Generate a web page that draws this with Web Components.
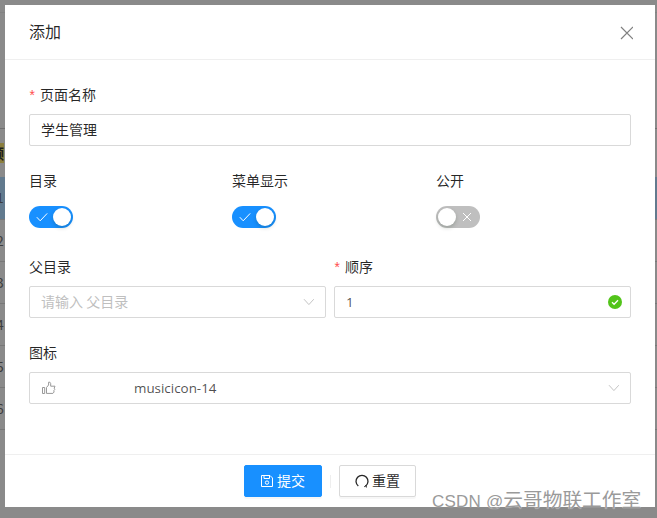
<!DOCTYPE html>
<html><head><meta charset="utf-8">
<style>
html,body{margin:0;padding:0;height:100%;overflow:hidden;background:#8a8a8a}
body{font-family:"Noto Sans CJK SC","Liberation Sans",sans-serif}
</style></head>
<body>
<app-page></app-page>
<template id="t-page">
<style>
:host{display:block;width:657px;height:518px;position:relative;overflow:hidden;background:#8a8a8a}
</style>
<bg-table></bg-table>
<modal-dialog title="添加">
  <form-row cols="1">
    <form-item label="页面名称" required><text-box value="学生管理"></text-box></form-item>
  </form-row>
  <form-row cols="3">
    <form-item label="目录"><toggle-switch on></toggle-switch></form-item>
    <form-item label="菜单显示"><toggle-switch on></toggle-switch></form-item>
    <form-item label="公开"><toggle-switch></toggle-switch></form-item>
  </form-row>
  <form-row cols="2">
    <form-item label="父目录"><text-box placeholder="请输入 父目录" suffix="chevron"></text-box></form-item>
    <form-item label="顺序" required><text-box value="1" suffix="ok" latin></text-box></form-item>
  </form-row>
  <form-row cols="1">
    <form-item label="图标"><text-box value="musicicon-14" suffix="chevron" icon latin></text-box></form-item>
  </form-row>
  <ui-button slot="footer" primary icon="save">提交</ui-button>
  <span slot="footer" style="width:1px;height:13px;background:#eee;margin:0 8px"></span>
  <ui-button slot="footer" icon="reload">重置</ui-button>
</modal-dialog>
<water-mark></water-mark>
</template>
<script>
const svg={
 save:'<svg width="14" height="14" viewBox="0 0 14 14" fill="none" stroke="currentColor" stroke-width="1"><path d="M1.5 1.5h8.5l2.5 2.5v8.5h-11z"/><path d="M4 1.5v3h5.5v-3"/><circle cx="7" cy="8.6" r="1.7"/></svg>',
 reload:'<svg width="14" height="14" viewBox="0 0 14 14" fill="none" stroke="currentColor" stroke-width="1.3"><path d="M3.3 12A6 6 0 1 1 10.7 12"/><path d="M9.2 12.8 11 11.6l.4 1.9" stroke-width="1"/></svg>',
 close:'<svg width="14" height="14" viewBox="0 0 14 14" fill="none" stroke="#808080" stroke-width="1.2"><path d="M2 1l12 12M14 1L2 13"/></svg>',
 chevron:'<svg width="12" height="12" viewBox="0 0 12 12" fill="none" stroke="#c4c4c4" stroke-width="1"><path d="M2 3.2 6.9 8.6 11.8 3.2"/></svg>',
 ok:'<svg width="14" height="14" viewBox="0 0 14 14"><circle cx="7" cy="7" r="7" fill="#52c41a"/><path d="M4 7.2l2.1 2.1L10 5.2" fill="none" stroke="#fff" stroke-width="1.3"/></svg>',
 thumb:'<svg width="16" height="16" viewBox="0 0 16 16" fill="none" stroke="#999" stroke-width="1"><path d="M1.5 7.5h2.2v6H1.5z"/><path d="M5.5 7.5 7.6 5V2.2h1.3l.8 1.4v2.6h4.3l-.8 2 .6 1.2-1 1.3.3 1.3-1.2 1.4H5.5z"/></svg>',
 check:'<svg width="12" height="12" viewBox="0 0 12 12" fill="none" stroke="#fff" stroke-width="1"><path d="M.8 6.2 4.2 9.8 11.2 2.4"/></svg>',
 cross:'<svg width="10" height="10" viewBox="0 0 10 10" fill="none" stroke="#fff" stroke-width="1"><path d="M1 1l8 8M9 1l-8 8"/></svg>'
};
function def(name,cls){customElements.define(name,cls)}
class Base extends HTMLElement{
  render(html){this.attachShadow({mode:'open'}).innerHTML=html}
}
def('bg-table',class extends Base{connectedCallback(){
  const marks=['1','2','3','4','5','6'];
  this.render(`<style>
  :host{display:block;height:518px;color:#333;font-size:14px}
  .gap{height:128px;box-sizing:border-box;padding-top:12px}
  .gap div{height:1px;background:#828282}
  .h{height:48px;border-top:1px solid #6f6f6f;font-weight:700;display:flex;align-items:center;color:#1c1c1c}
  .h span{margin-left:-10px;font-size:14px;background:#8b7f3e;}
  .r{height:41px;border-top:1px solid #787878;line-height:40px;font-size:14px;color:#3d3d3d}
  .r span{margin-left:-4px;display:inline-block}
  .r.sel{background:#627a8e;height:42px;border-top:0}
  </style>
  <div class="gap"><div></div></div>
  <div class="h"><span>顾</span></div>
  ${marks.map((m,i)=>`<div class="r ${i==0?'sel':''}"><span>${m}</span></div>`).join('')}
  <div class="r"></div>`);
}});
def('modal-dialog',class extends Base{connectedCallback(){
  this.render(`<style>
  :host{display:flex;flex-direction:column;position:absolute;left:5px;top:5px;width:650px;height:502px;background:#fff;box-sizing:border-box;color:rgba(0,0,0,.85)}
  header{height:55px;box-sizing:border-box;border-bottom:1px solid #efefef;padding:0 24px;display:flex;align-items:center;justify-content:space-between;font-size:16px;line-height:22px;flex:none}
  header h1{font:inherit;margin:0 0 2px;font-weight:400}
  header .x{display:flex;margin-right:-2px;margin-top:1px}
  main{flex:1;padding:24px 24px 0;box-sizing:border-box;display:flex;flex-direction:column;min-height:0}
  footer{height:53px;flex:none;box-sizing:border-box;border-top:1px solid #efefef;display:flex;align-items:center;justify-content:center;padding-right:0}
  </style>
  <header><h1>${this.getAttribute('title')}</h1><span class="x">${svg.close}</span></header>
  <main><slot></slot></main>
  <footer><slot name="footer"></slot></footer>`);
}});
def('form-row',class extends Base{connectedCallback(){
  const c=this.getAttribute('cols');
  const t={1:'602px',2:'297px 297px',3:'203px 204px 195px'}[c];
  this.render(`<style>:host{display:grid;grid-template-columns:${t};column-gap:${c==2?8:0}px;margin-bottom:24px}</style><slot></slot>`);
}});
def('form-item',class extends Base{connectedCallback(){
  const r=this.hasAttribute('required');
  this.render(`<style>
  :host{display:flex;flex-direction:column;gap:8px;font-size:14px}
  label{height:22px;box-sizing:border-box;padding-bottom:2px;line-height:20px;display:flex;align-items:center;color:rgba(0,0,0,.85)}
  i{font:14px "Liberation Mono",monospace;color:#ff4d4f;width:11px;flex:none;line-height:1;padding-top:6px;margin-left:-1px;margin-right:1px}
  .c{height:32px;display:flex;align-items:center}
  ::slotted(*){flex:1}
  </style>
  <label>${r?'<i>*</i>':''}${this.getAttribute('label')}</label><div class="c"><slot></slot></div>`);
}});
def('text-box',class extends Base{connectedCallback(){
  const v=this.getAttribute('value'),p=this.getAttribute('placeholder'),s=this.getAttribute('suffix');
  const lat=this.hasAttribute('latin');
  const ic=this.hasAttribute('icon');
  this.render(`<style>
  :host{display:flex;align-items:center;height:32px;box-sizing:border-box;border:1px solid #d9d9d9;border-radius:2px;padding:0 11px;font-size:14px;color:rgba(0,0,0,.85);background:#fff}
  .v{flex:1;white-space:nowrap;${lat?'font-family:"Open Sans","Noto Sans",sans-serif;font-size:13.4px;color:rgba(0,0,0,.7);':'margin-bottom:2px;'}}
  .p{color:#bfbfbf}
  .i{display:flex;width:93px;flex:none}
  .s{display:flex;margin-left:8px}
  .s.ok{margin-right:-3px}
  </style>
  ${ic?`<span class="i">${svg.thumb}</span>`:''}
  <span class="v ${p?'p':''}">${v||p}</span>
  ${s?`<span class="s ${s}">${svg[s]}</span>`:''}`);
}});
def('toggle-switch',class extends Base{connectedCallback(){
  const on=this.hasAttribute('on');
  this.render(`<style>
  :host{display:flex;flex:none!important;width:44px;height:22px;margin-top:2px;border-radius:11px;background:${on?'#1890ff':'#bfbfbf'};align-items:center;justify-content:space-between;padding:0 2px;box-sizing:border-box;flex-direction:${on?'row':'row-reverse'}}
  .k{width:18px;height:18px;border-radius:50%;background:#fff;box-shadow:0 2px 4px rgba(0,35,11,.2)}
  .m{display:flex;width:22px;justify-content:center}
  </style><span class="m">${on?svg.check:svg.cross}</span><span class="k"></span>`);
}});
def('ui-button',class extends Base{connectedCallback(){
  const pr=this.hasAttribute('primary');
  this.render(`<style>
  :host{display:inline-flex;align-items:center;justify-content:center;gap:3px;height:32px;box-sizing:border-box;width:${pr?78:77}px;padding-right:${pr?1:0}px;border-radius:2px;font-size:14px;border:1px solid ${pr?'#1890ff':'#d9d9d9'};background:${pr?'#1890ff':'#fff'};color:${pr?'#fff':'rgba(0,0,0,.85)'};box-shadow:0 2px 0 rgba(0,0,0,.03)}
  span{display:flex}
  .t{margin-bottom:2px}
  </style><span>${svg[this.getAttribute('icon')]}</span><span class="t"><slot></slot></span>`);
}});
def('water-mark',class extends Base{connectedCallback(){
  this.render(`<style>
  :host{position:absolute;left:432px;top:484px;white-space:nowrap;color:#9a9a9a;line-height:30px;font-family:"Noto Sans CJK SC",sans-serif;text-shadow:0 0 1px #fff}
  .a{font:17px/30px "Liberation Sans",sans-serif;letter-spacing:.2px}
  .b{font-size:19.7px}
  </style><span class="a">CSDN @</span><span class="b">云哥物联工作室</span>`);
}});
def('app-page',class extends Base{connectedCallback(){
  this.attachShadow({mode:'open'}).appendChild(document.getElementById('t-page').content.cloneNode(true));
}});
</script>
</body></html>
